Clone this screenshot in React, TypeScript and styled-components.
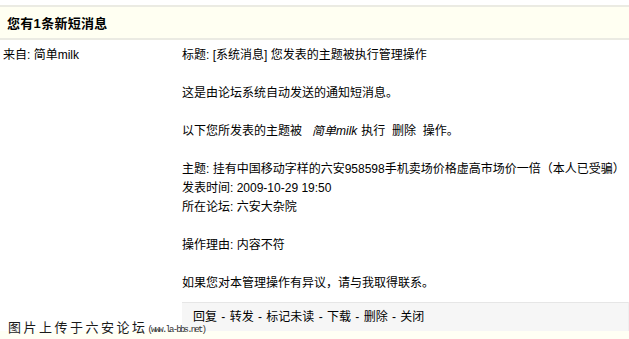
import React from "react";
import styled, { createGlobalStyle } from "styled-components";

const Global = createGlobalStyle`
  html, body { margin: 0; padding: 0; background: #fff; }
  body { font-family: "Liberation Sans", "Noto Sans CJK SC", sans-serif; font-size: 12px; color: #000; }
`;

const Page = styled.div`
  position: relative;
  width: 629px;
  height: 339px;
  overflow: hidden;
  padding-top: 5px;
  box-sizing: border-box;
`;

const Header = styled.div`
  height: 31px;
  border-top: 2px solid #ebebe3;
  border-bottom: 2px solid #ebebe3;
  background: #fffff2;
  display: flex;
  align-items: center;
  padding-left: 7px;
  font-weight: bold;
  font-size: 13px;
  letter-spacing: 0.3px;
`;

const Row = styled.div`
  display: grid;
  grid-template-columns: 182px 1fr;
`;

const From = styled.div`
  padding: 6px 0 0 3px;
  line-height: 19px;
`;

const Body = styled.div`
  padding-top: 6px;
  line-height: 19px;
`;

const Line = styled.div<{ $gap?: boolean }>`
  margin-top: ${(p) => (p.$gap ? "19px" : "0")};
  white-space: pre;
`;

const Name = styled.em`
  font-style: italic;
  margin: 0 4px 0 10px;
`;

const Actions = styled.div`
  margin-top: 9px;
  height: 29px;
  border-top: 1px solid #e6e6e6;
  border-right: 1px solid #efefef;
  background: #f6f6f6;
  display: flex;
  align-items: center;
  padding-left: 11px;
  box-sizing: border-box;
  white-space: pre;
  word-spacing: 1px;
`;

const Strip = styled.div`
  height: 12px;
  background: #fffff4;
`;

const Watermark = styled.div`
  position: absolute;
  left: 8px;
  top: 317px;
  display: flex;
  align-items: baseline;
  font-family: "Noto Sans CJK SC", sans-serif;
  font-size: 13px;
  letter-spacing: 2.5px;
  color: #1a1a1a;
`;

const Narrow = styled.span`
  font-family: "Liberation Mono", monospace;
  font-size: 9px;
  letter-spacing: -1.8px;
  color: #333;
`;

export default function App() {
  return (
    <Page>
      <Global />
      <Header>您有1条新短消息</Header>
      <Row>
        <From>来自: 简单milk</From>
        <Body>
          <Line>标题: [系统消息] 您发表的主题被执行管理操作</Line>
          <Line $gap>这是由论坛系统自动发送的通知短消息。</Line>
          <Line $gap>
            以下您所发表的主题被<Name>简单milk</Name>执行  删除  操作。
          </Line>
          <Line $gap>主题: 挂有中国移动字样的六安958598手机卖场价格虚高市场价一倍（本人已受骗）</Line>
          <Line>发表时间: 2009-10-29 19:50</Line>
          <Line>所在论坛: 六安大杂院</Line>
          <Line $gap>操作理由: 内容不符</Line>
          <Line $gap>如果您对本管理操作有异议，请与我取得联系。</Line>
          <Actions>回复 - 转发 - 标记未读 - 下载 - 删除 - 关闭</Actions>
        </Body>
      </Row>
      <Strip />
      <Watermark>
        图片上传于六安论坛<Narrow>(www.la-bbs.net)</Narrow>
      </Watermark>
    </Page>
  );
}
